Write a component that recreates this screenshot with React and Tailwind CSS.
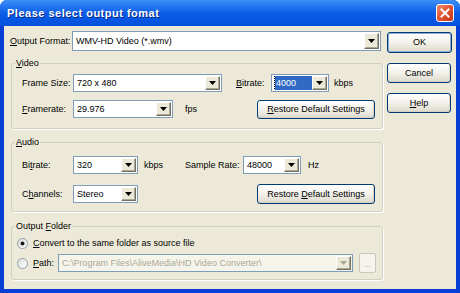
import React from "react";

const FONT = { fontFamily: '"Liberation Sans", Arial, sans-serif' };

function U({ children }) {
  return <span className="underline underline-offset-[1px]">{children}</span>;
}

function Arrow({ disabled }) {
  return (
    <div className="w-[15px] h-full flex items-center justify-center bg-[#ece9d8] border border-t-white border-l-white border-b-[#716f64] border-r-[#716f64] shadow-[inset_-1px_-1px_0_#aca899]">
      <svg width="7" height="4" viewBox="0 0 7 4">
        <path d="M0 0H7L3.5 4Z" fill={disabled ? "#aca899" : "#000"} />
      </svg>
    </div>
  );
}

function Combo({ width, value, disabled, selected, className = "" }) {
  return (
    <div
      className={`h-[18px] flex items-stretch border border-[#7f9db9] p-[1px] ${disabled ? "bg-[#f5f4ea]" : "bg-white"} ${className}`}
      style={{ width }}
    >
      <div className="flex-1 flex items-center pl-[2px] overflow-hidden whitespace-nowrap">
        {selected ? (
          <span className="bg-[#316ac5] text-white px-[1px] outline outline-1 outline-dotted outline-[#000] h-full flex items-center w-full">
            {value}
          </span>
        ) : (
          <span className={disabled ? "text-[#aca899]" : "text-black"}>{value}</span>
        )}
      </div>
      <Arrow disabled={disabled} />
    </div>
  );
}

function Btn({ children, width, height = 20, isDefault, className = "" }) {
  return (
    <div
      className={`flex items-center justify-center rounded-[3px] border border-[#003c74] bg-gradient-to-b from-white via-[#f3f1ea] to-[#dcd8cb] ${isDefault ? "shadow-[inset_0_0_0_1px_#8fa9d8]" : "shadow-[inset_-1px_-1px_0_#d6d0c5]"} ${className}`}
      style={{ width, height }}
    >
      {children}
    </div>
  );
}

function Radio({ checked }) {
  return (
    <svg width="11" height="11" viewBox="0 0 11 11">
      <defs>
        <linearGradient id={checked ? "rg1" : "rg2"} x1="0" y1="0" x2="1" y2="1">
          <stop offset="0" stopColor="#dcdcd6" />
          <stop offset="1" stopColor="#ffffff" />
        </linearGradient>
      </defs>
      <circle cx="5.5" cy="5.5" r="5" fill={`url(#${checked ? "rg1" : "rg2"})`} stroke="#8f9fb0" strokeWidth="1" />
      {checked && <circle cx="5.5" cy="5.5" r="2" fill="#1a1a1a" />}
    </svg>
  );
}

function Group({ title, children, className = "" }) {
  return (
    <fieldset className={`border border-[#d0d0bf] rounded-[3px] shadow-[1px_1px_0_#fff] ${className}`}>
      <legend className="ml-[3px] px-[1px] leading-[11px] text-black">{title}</legend>
      {children}
    </fieldset>
  );
}

export default function App() {
  return (
    <div
      className="w-[460px] h-[293px] flex flex-col bg-[#0a3fd6] rounded-t-[7px] overflow-hidden text-[9px] leading-[11px] text-black"
      style={FONT}
    >
      {/* title bar */}
      <div className="h-[26px] shrink-0 flex items-center justify-between pl-[7px] pr-[6px] bg-gradient-to-b from-[#3c8ff6] via-[#0a5de8] to-[#0550dd]">
        <span className="text-white font-bold text-[11px] tracking-[0.5px] [text-shadow:1px_1px_0_#0a2a8a]">
          Please select output fomat
        </span>
        <div className="w-[18px] h-[18px] rounded-[3px] border border-white bg-gradient-to-br from-[#f08a6a] via-[#e2522d] to-[#c3381a] flex items-center justify-center">
          <svg width="10" height="10" viewBox="0 0 10 10">
            <path d="M1.5 1.5L8.5 8.5M8.5 1.5L1.5 8.5" stroke="#fff" strokeWidth="2" strokeLinecap="square" />
          </svg>
        </div>
      </div>

      {/* body */}
      <div className="flex-1 mx-[4px] mb-[4px] bg-[#ece9d8] flex">
        {/* left column */}
        <div className="w-[379px] pl-[6px] pt-[5px] flex flex-col">
          <div className="flex items-center h-[20px]">
            <span className="w-[62px]">
              <U>O</U>utput Format:
            </span>
            <Combo width={309} value="WMV-HD Video (*.wmv)" className="h-[20px]" />
          </div>

          <Group title={<><U>V</U>ideo</>} className="ml-[1px] mt-[7px] pb-[9px]">
            <div className="flex items-center mt-[5px] h-[18px]">
              <span className="w-[51px] pl-[10px] shrink-0 box-content">Frame Size:</span>
              <Combo width={149} value="720 x 480" />
              <span className="ml-[14px] w-[35px]">
                <U>B</U>itrate:
              </span>
              <Combo width={58} value="4000" selected />
              <span className="ml-[5px]">kbps</span>
            </div>
            <div className="flex items-center mt-[7px] h-[20px]">
              <span className="w-[51px] pl-[10px] shrink-0 box-content">
                <U>F</U>ramerate:
              </span>
              <Combo width={100} value="29.976" />
              <span className="ml-[12px] w-[13px]">fps</span>
              <Btn width={118} height={19} className="ml-[59px]">
                <span>
                  <U>R</U>estore Default Settings
                </span>
              </Btn>
            </div>
          </Group>

          <Group title={<><U>A</U>udio</>} className="ml-[1px] mt-[8px] pb-[7px]">
            <div className="flex items-center mt-[8px] h-[18px]">
              <span className="w-[51px] pl-[10px] shrink-0 box-content">
                Bi<U>t</U>rate:
              </span>
              <Combo width={65} value="320" />
              <span className="ml-[6px] w-[41px]">kbps</span>
              <span className="w-[58px]">Sample Rate:</span>
              <Combo width={58} value="48000" />
              <span className="ml-[7px]">Hz</span>
            </div>
            <div className="flex items-center mt-[10px] h-[20px]">
              <span className="w-[51px] pl-[10px] shrink-0 box-content">
                C<U>h</U>annels:
              </span>
              <Combo width={65} value="Stereo" />
              <Btn width={118} height={20} className="ml-[119px]">
                <span>
                  Restore <U>D</U>efault Settings
                </span>
              </Btn>
            </div>
          </Group>

          <Group title={<>Output <U>F</U>older</>} className="ml-[1px] mt-[9px] pb-[6px]">
            <div className="flex items-center mt-[4px] h-[14px] pl-[5px]">
              <Radio checked />
              <span className="ml-[5px]">
                <U>C</U>onvert to the same folder as source file
              </span>
            </div>
            <div className="flex items-center mt-[3px] h-[20px] pl-[5px]">
              <Radio />
              <span className="ml-[5px] w-[25px]">
                <U>P</U>ath:
              </span>
              <Combo width={295} value="C:\Program Files\AliveMedia\HD Video Converter\" disabled className="h-[17px]" />
              <div className="ml-[6px] w-[17px] h-[20px] rounded-[2px] border border-[#c9c7ba] bg-[#f4f3ee] flex items-end justify-center pb-[3px] text-[#aca899] text-[8px] leading-[8px]">
                ...
              </div>
            </div>
          </Group>
        </div>

        {/* right column */}
        <div className="pl-[4px] pt-[6px] flex flex-col gap-[10px]">
          <Btn width={65} height={21} isDefault className="border-[#003c74]">
            OK
          </Btn>
          <Btn width={64} height={20}>Cancel</Btn>
          <Btn width={64} height={20}>
            <U>H</U>elp
          </Btn>
        </div>
      </div>
    </div>
  );
}
